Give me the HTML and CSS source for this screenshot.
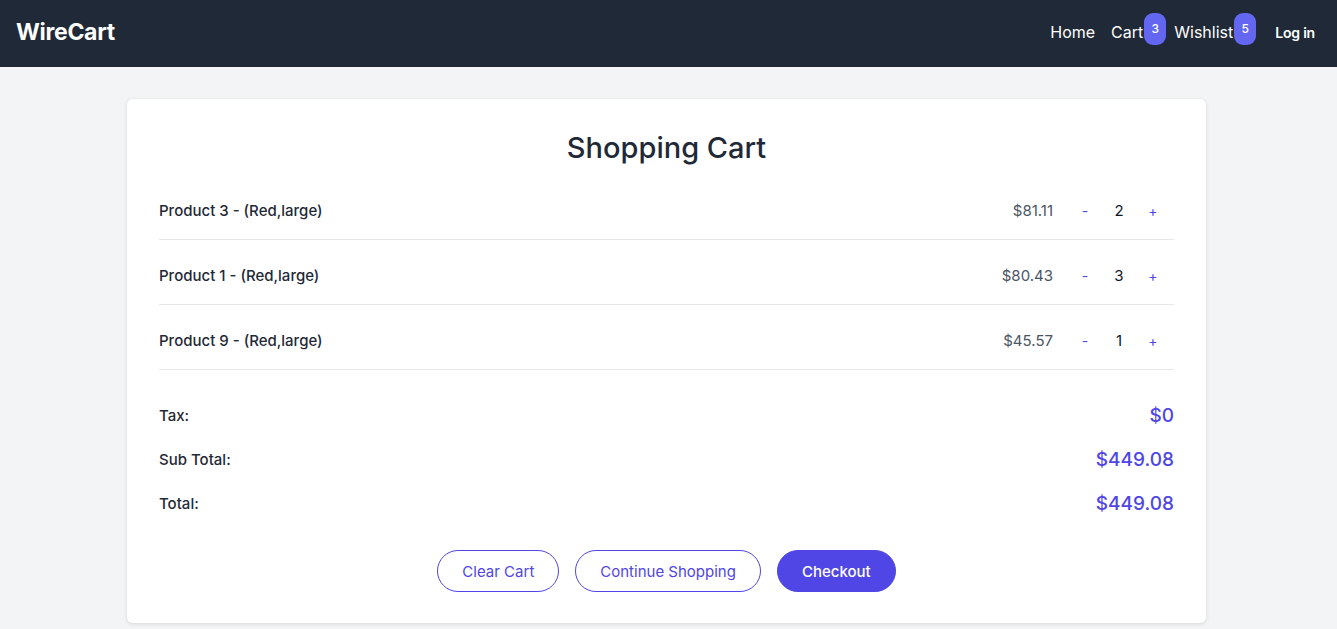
FILE: index.html
```html
<!DOCTYPE html>
<html lang="en">
<head>
    <meta charset="UTF-8">
    <meta name="viewport" content="width=device-width, initial-scale=1.0">
    <title>WireCart - Shopping Cart</title>
    <link rel="stylesheet" href="styles.css">
</head>
<body>
    <nav class="navbar">
        <a class="logo" href="#">WireCart</a>
        <div class="nav-links">
            <a href="#">Home</a>
            <a href="#" class="with-badge">Cart<span class="badge">3</span></a>
            <a href="#" class="with-badge">Wishlist<span class="badge">5</span></a>
            <a href="#" class="login">Log in</a>
        </div>
    </nav>

    <main class="page">
        <section class="card">
            <h1 class="title">Shopping Cart</h1>

            <div class="cart-row">
                <span class="product">Product 3 - (Red,large)</span>
                <span class="price">$81.11</span>
                <div class="qty">
                    <button class="qty-btn">-</button>
                    <span class="qty-num">2</span>
                    <button class="qty-btn">+</button>
                </div>
            </div>
            <div class="cart-row">
                <span class="product">Product 1 - (Red,large)</span>
                <span class="price">$80.43</span>
                <div class="qty">
                    <button class="qty-btn">-</button>
                    <span class="qty-num">3</span>
                    <button class="qty-btn">+</button>
                </div>
            </div>
            <div class="cart-row">
                <span class="product">Product 9 - (Red,large)</span>
                <span class="price">$45.57</span>
                <div class="qty">
                    <button class="qty-btn">-</button>
                    <span class="qty-num">1</span>
                    <button class="qty-btn">+</button>
                </div>
            </div>

            <div class="summary">
                <div class="summary-row">
                    <span>Tax:</span>
                    <span class="amount">$0</span>
                </div>
                <div class="summary-row">
                    <span>Sub Total:</span>
                    <span class="amount">$449.08</span>
                </div>
                <div class="summary-row">
                    <span>Total:</span>
                    <span class="amount">$449.08</span>
                </div>
            </div>

            <div class="actions">
                <button class="btn btn-outline">Clear Cart</button>
                <button class="btn btn-outline">Continue Shopping</button>
                <button class="btn btn-primary">Checkout</button>
            </div>
        </section>
    </main>
</body>
</html>
```

FILE: styles.css
```css
html, body {
    margin: 0;
    padding: 0;
    background: #f3f4f6;
    font-family: Inter, "Noto Sans", sans-serif;
    color: #1f2937;
}
a {
    text-decoration: none;
    color: inherit;
}
button {
    font-family: inherit;
    cursor: pointer;
}

.navbar {
    height: 64px;
    background: #1f2937;
    display: flex;
    align-items: center;
    justify-content: space-between;
    padding: 0 22px 3px 16px;
}
.logo {
    color: #fff;
    font-size: 23px;
    font-weight: 700;
    letter-spacing: -0.3px;
}
.nav-links {
    display: flex;
    align-items: center;
    gap: 16px;
    color: #fff;
    font-size: 16px;
}
.with-badge {
    display: flex;
    align-items: center;
}
.badge {
    background: #6366f1;
    color: #fff;
    font-size: 12px;
    font-weight: 500;
    width: 22px;
    height: 32px;
    border-radius: 9px;
    display: flex;
    align-items: center;
    justify-content: center;
    margin-left: 1px;
    margin-right: -8px;
    margin-top: -7px;
}
.login {
    font-size: 14px;
    font-weight: 600;
    margin-left: 11px;
    letter-spacing: -0.2px;
}

.page {
    padding: 32px 4px 6px 0;
    display: flex;
    justify-content: center;
}
.card {
    width: 1015px;
    background: #fff;
    border-radius: 6px;
    box-shadow: 0 1px 4px rgba(0, 0, 0, 0.12);
    padding: 30px 32px 31px;
}
.title {
    margin: 0 0 8px;
    text-align: center;
    font-size: 29px;
    line-height: 38px;
    font-weight: 500;
    color: #1f2937;
}

.cart-row {
    display: flex;
    align-items: center;
    height: 58px;
    padding-top: 6px;
    border-bottom: 1px solid #e5e7eb;
    font-size: 15px;
}
.product {
    flex: 1;
    font-weight: 500;
    color: #1f2937;
}
.price {
    color: #4b5563;
    margin-right: 18px;
}
.qty {
    display: flex;
    align-items: center;
    gap: 8px;
    margin-right: 7px;
}
.qty-btn {
    width: 28px;
    border: none;
    background: none;
    color: #4f46e5;
    font-size: 14px;
    padding: 0;
}
.qty-num {
    width: 24px;
    text-align: center;
    color: #111827;
}

.summary {
    margin-top: 31px;
}
.summary-row {
    display: flex;
    justify-content: space-between;
    align-items: center;
    height: 28px;
    margin-bottom: 16px;
    font-size: 15px;
    font-weight: 500;
}
.amount {
    font-size: 19px;
    color: #4f46e5;
}

.actions {
    display: flex;
    justify-content: center;
    gap: 16px;
    margin-top: 33px;
}
.btn {
    height: 42px;
    border-radius: 21px;
    font-size: 15px;
    padding: 0 24px;
}
.btn-outline {
    background: #fff;
    border: 1px solid #4f46e5;
    color: #4f46e5;
}
.btn-primary {
    background: #4f46e5;
    border: 1px solid #4f46e5;
    color: #fff;
    font-weight: 500;
}
```
